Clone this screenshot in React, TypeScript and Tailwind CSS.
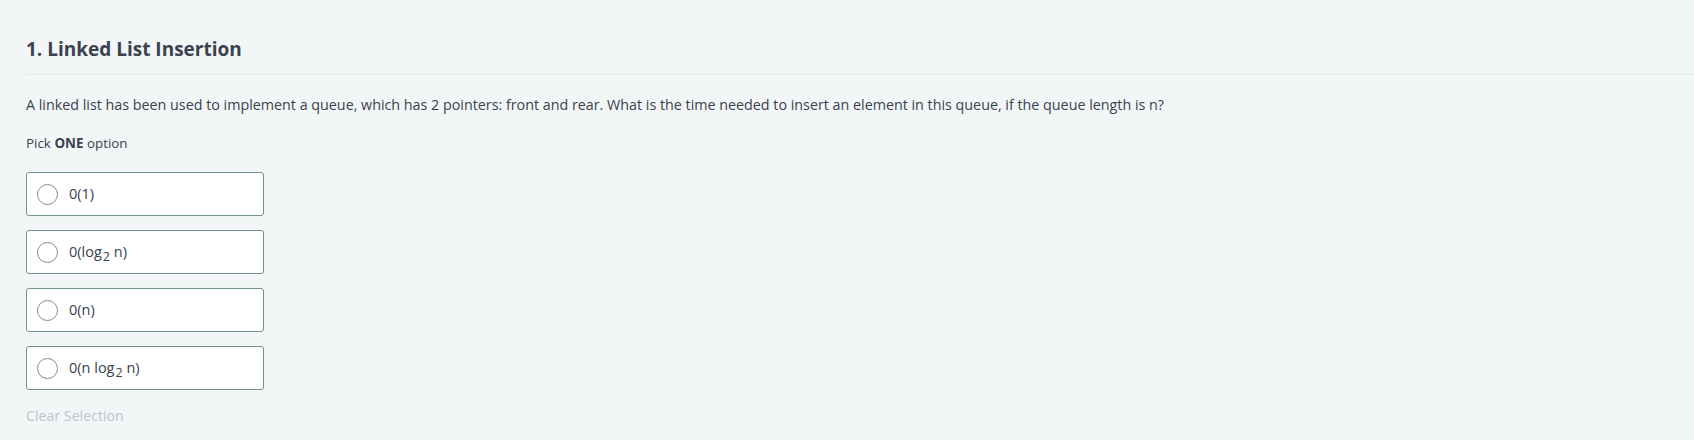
import React, { useState } from "react";

const options = [
  { id: "a", label: <>0(1)</> },
  {
    id: "b",
    label: (
      <>
        0(log<sub className="text-[12.5px] relative top-[4px] ml-[1px]">2</sub> n)
      </>
    ),
  },
  { id: "c", label: <>0(n)</> },
  {
    id: "d",
    label: (
      <>
        0(n log<sub className="text-[12.5px] relative top-[4px] ml-[1px]">2</sub> n)
      </>
    ),
  },
];

const App: React.FC = () => {
  const [selected, setSelected] = useState<string | null>(null);

  return (
    <div
      className="min-h-screen bg-[#f3f6f7] text-[#39424e] pl-[26px] pt-[34px]"
      style={{ fontFamily: '"Open Sans", sans-serif' }}
    >
      {/* Question header */}
      <h1 className="text-[19px] font-bold leading-[30px] pb-[10px] border-b border-[#e3e8ea]">
        1. Linked List Insertion
      </h1>

      <p className="text-[14.3px] leading-[20px] mt-[20px]">
        A linked list has been used to implement a queue, which has 2 pointers:
        front and rear. What is the time needed to insert an element in this
        queue, if the queue length is n?
      </p>

      <p className="text-[13.4px] leading-[18px] mt-[19px]">
        Pick <span className="font-bold">ONE</span> option
      </p>

      {/* Options */}
      <div className="flex flex-col gap-[14px] mt-[20px] w-[238px]">
        {options.map((opt) => (
          <label
            key={opt.id}
            onClick={() => setSelected(opt.id)}
            className="flex items-center h-[44px] px-[10px] gap-[11px] bg-white border border-[#738f93] rounded-[3px] cursor-pointer"
          >
            <span className="w-[21px] h-[21px] rounded-full border border-[#738f93] flex items-center justify-center shrink-0">
              {selected === opt.id && (
                <span className="w-[11px] h-[11px] rounded-full bg-[#39424e]" />
              )}
            </span>
            <span className="text-[14.5px]">{opt.label}</span>
          </label>
        ))}
      </div>

      <button
        onClick={() => setSelected(null)}
        className="text-[14.2px] leading-[20px] text-[#b9c6cc] mt-[16px] block"
      >
        Clear Selection
      </button>
    </div>
  );
};

export default App;
